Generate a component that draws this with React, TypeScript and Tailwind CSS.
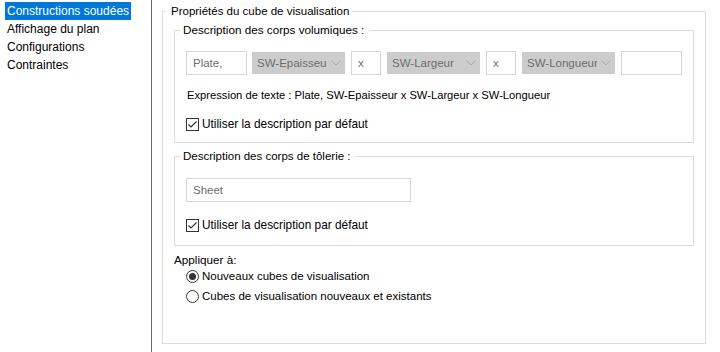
import React from 'react';

const Chevron: React.FC = () => (
  <svg width="10" height="6" viewBox="0 0 10 6" className="shrink-0">
    <path d="M0.5 0.5 L5 5 L9.5 0.5" fill="none" stroke="#a8a8a8" strokeWidth="1" />
  </svg>
);

const Combo: React.FC<{ label: string; width: string }> = ({ label, width }) => (
  <div className={`${width} h-[22px] bg-[#cccccc] border border-[#cccccc] flex items-center pl-[4px] pr-[3px] gap-[4px]`}>
    <span className="flex-1 overflow-hidden whitespace-nowrap text-[#6d6d6d] text-[11.5px]">{label}</span>
    <Chevron />
  </div>
);

const Box: React.FC<{ text?: string; width: string }> = ({ text, width }) => (
  <div className={`${width} h-[24px] bg-white border border-[#d6d6d6] flex items-center pl-[6px] text-[#6d6d6d] text-[11.5px]`}>
    {text}
  </div>
);

const CheckRow: React.FC<{ label: string }> = ({ label }) => (
  <div className="flex items-center h-[16px] gap-[3px]">
    <div className="w-[13px] h-[13px] border border-[#333333] flex items-center justify-center">
      <svg width="11" height="11" viewBox="0 0 11 11">
        <path d="M1.5 5.5 L4 8 L9.5 2.5" fill="none" stroke="#333333" strokeWidth="1.2" />
      </svg>
    </div>
    <span className="text-[11.85px]">{label}</span>
  </div>
);

const Radio: React.FC<{ label: string; checked?: boolean }> = ({ label, checked }) => (
  <div className="flex items-center h-[16px] gap-[3px]">
    <div className="w-[13px] h-[13px] rounded-full border border-[#333333] flex items-center justify-center">
      {checked && <div className="w-[7px] h-[7px] rounded-full bg-[#333333]" />}
    </div>
    <span className="text-[11.5px]">{label}</span>
  </div>
);

export default function App() {
  const items = ['Constructions soudées', 'Affichage du plan', 'Configurations', 'Contraintes'];

  return (
    <div className="w-[720px] h-[352px] flex bg-white text-[12px] leading-[16px] text-black font-['Liberation_Sans',Arial,sans-serif]">
      <div className="w-[152px] h-full shrink-0 border-r border-[#696969] pt-[2px] pl-[5px]">
        {items.map((it, i) => (
          <div key={it} className="h-[18px] leading-[18px]">
            <span className={i === 0 ? 'inline-block bg-[#0078d7] text-white px-[2px]' : 'inline-block px-[2px]'}>{it}</span>
          </div>
        ))}
      </div>

      <div className="flex-1 pl-[10px] pt-[3px]">
        <fieldset className="w-[543px] h-[341px] border border-[#dcdcdc] px-[11px]">
          <legend className="ml-[-9px] pl-[6px] pr-[3px] text-[11.5px]">Propriétés du cube de visualisation</legend>

          <fieldset className="mt-[3px] border border-[#dcdcdc] px-[11px] pb-[10px]">
            <legend className="ml-[-6px] pl-[3px] pr-[5px] text-[11.7px]">Description des corps volumiques :</legend>
            <div className="mt-[13px] flex items-center">
              <Box text="Plate," width="w-[61px]" />
              <div className="ml-[5px]"><Combo label="SW-Epaisseur" width="w-[93px]" /></div>
              <div className="ml-[6px]"><Box text="x" width="w-[30px]" /></div>
              <div className="ml-[6px]"><Combo label="SW-Largeur" width="w-[93px]" /></div>
              <div className="ml-[6px]"><Box text="x" width="w-[30px]" /></div>
              <div className="ml-[6px]"><Combo label="SW-Longueur" width="w-[93px]" /></div>
              <div className="ml-[6px]"><Box width="w-[61px]" /></div>
            </div>
            <div className="mt-[12px] pl-[1px] text-[11.2px]">Expression de texte : Plate, SW-Epaisseur x SW-Largeur x SW-Longueur</div>
            <div className="mt-[13px]">
              <CheckRow label="Utiliser la description par défaut" />
            </div>
          </fieldset>

          <fieldset className="mt-[5px] border border-[#dcdcdc] px-[11px] pb-[12px]">
            <legend className="ml-[-6px] pl-[3px] pr-[5px] text-[11.5px]">Description des corps de tôlerie :</legend>
            <div className="mt-[14px]">
              <Box text="Sheet" width="w-[225px]" />
            </div>
            <div className="mt-[15px]">
              <CheckRow label="Utiliser la description par défaut" />
            </div>
          </fieldset>

          <div className="mt-[6px] text-[11.7px]">Appliquer à:</div>
          <div className="pl-[12px] flex flex-col gap-[4px]">
            <Radio label="Nouveaux cubes de visualisation" checked />
            <Radio label="Cubes de visualisation nouveaux et existants" />
          </div>
        </fieldset>
      </div>
    </div>
  );
}
